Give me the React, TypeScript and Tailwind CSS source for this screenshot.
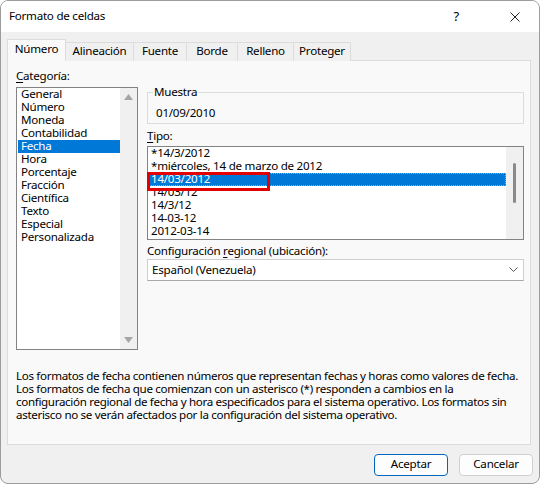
const font = { fontFamily: '"Noto Sans", "Liberation Sans", sans-serif' }

const categorias = [
  'General',
  'Número',
  'Moneda',
  'Contabilidad',
  'Fecha',
  'Hora',
  'Porcentaje',
  'Fracción',
  'Científica',
  'Texto',
  'Especial',
  'Personalizada',
]

const tipos = [
  '*14/3/2012',
  '*miércoles, 14 de marzo de 2012',
  '14/03/2012',
  '14/03/12',
  '14/3/12',
  '14-03-12',
  '2012-03-14',
]

const tabs = [
  { label: 'Alineación', w: 'w-[68px]' },
  { label: 'Fuente', w: 'w-[53px]' },
  { label: 'Borde', w: 'w-[51px]' },
  { label: 'Relleno', w: 'w-[56px]' },
  { label: 'Proteger', w: 'w-[57px]' },
]

function Arrow({ down }: { down?: boolean }) {
  return (
    <svg width="9" height="6" viewBox="0 0 9 6">
      {down ? (
        <path d="M0 0 H9 L4.5 6 Z" fill="#a6a6a6" />
      ) : (
        <path d="M0 6 H9 L4.5 0 Z" fill="#a6a6a6" />
      )}
    </svg>
  )
}

export default function App() {
  return (
    <div
      style={font}
      className="w-[540px] h-[484px] overflow-hidden rounded-[8px] border border-[#9c9c9c] bg-[#f0f0f0] text-[11.6px] leading-[12px] tracking-[-0.25px] text-black"
    >
      {/* title bar */}
      <div className="flex h-[31px] items-center bg-white pb-[2px] pl-[8px]">
        <span>Formato de celdas</span>
        <span className="ml-auto mr-[51px] text-[13px]">?</span>
        <svg className="mr-[19px] mt-[2px]" width="10" height="10" viewBox="0 0 10 10">
          <path d="M0.5 0.5 L9.5 9.5 M9.5 0.5 L0.5 9.5" stroke="#222" strokeWidth="1" />
        </svg>
      </div>

      {/* tabs */}
      <div className="relative z-10 -mb-px ml-[6px] mt-[7px] flex items-end">
        <div className="flex h-[22px] w-[59px] items-center justify-center border-x border-t border-[#dcdcdc] bg-[#f9f9f9] pb-[3px]">
          Número
        </div>
        {tabs.map((t) => (
          <div
            key={t.label}
            className={`flex h-[19px] ${t.w} items-center justify-center border-r border-t border-[#dcdcdc] bg-[#f0f0f0] pb-[2px]`}
          >
            {t.label}
          </div>
        ))}
      </div>

      {/* panel */}
      <div className="ml-[6px] h-[385px] w-[524px] border border-[#dcdcdc] bg-[#f9f9f9]">
        <div className="flex items-start">
          {/* categoria */}
          <div className="ml-[8px] flex flex-col pt-[9px]">
            <div className="mb-[5px]">
              <span className="underline underline-offset-2">C</span>ategoría:
            </div>
            <div className="flex h-[263px] w-[122px] border border-[#838383] bg-white pl-[1px]">
              <div className="flex-1">
                {categorias.map((c) => (
                  <div
                    key={c}
                    className={`h-[13px] px-[3px] ${c === 'Fecha' ? 'bg-[#0078d7] text-white' : ''}`}
                  >
                    {c}
                  </div>
                ))}
              </div>
              <div className="flex w-[17px] flex-col items-center justify-between bg-[#f0f0f0] pb-[6px] pt-[6px]">
                <Arrow />
                <Arrow down />
              </div>
            </div>
          </div>

          {/* right column */}
          <div className="ml-[9px] flex w-[377px] flex-col pt-[31px]">
            <div className="relative h-[32px] border border-[#dcdcdc] pl-[8px] pt-[14px]">
              <span className="absolute -top-[7px] left-[5px] bg-[#f9f9f9] px-[1px]">Muestra</span>
              01/09/2010
            </div>

            <div className="mb-[4px] mt-[6px]">
              <span className="underline underline-offset-2">T</span>ipo:
            </div>
            <div className="relative flex h-[94px] border border-[#838383] bg-white">
              <div className="flex-1">
                {tipos.map((t, i) => (
                  <div
                    key={t}
                    className={
                      i === 2
                        ? 'h-[13px] border border-dotted border-[#e8a23c] bg-[#0078d7] px-[2px] leading-[10px] text-white'
                        : 'h-[13px] px-[3px]'
                    }
                  >
                    {t}
                  </div>
                ))}
              </div>
              <div className="flex w-[17px] justify-center bg-[#f0f0f0] pt-[16px]">
                <div className="h-[40px] w-[3px] rounded-full bg-[#8a8a8a]" />
              </div>
              <div className="absolute -left-px top-[25px] h-[19px] w-[123px] border-[3px] border-[#e30000]" />
            </div>

            <div className="mb-[2px] mt-[5px]">
              Configuración <span className="underline underline-offset-2">r</span>egional (ubicación):
            </div>
            <div className="flex h-[22px] items-center border border-[#cfcfcf] border-b-[#a8a8a8] bg-white pb-px pl-[4px]">
              <span>Español (Venezuela)</span>
              <svg className="ml-auto mr-[5px]" width="9" height="5" viewBox="0 0 9 5">
                <path d="M0.5 0.5 L4.5 4.5 L8.5 0.5" stroke="#555" fill="none" strokeWidth="1" />
              </svg>
            </div>
          </div>
        </div>

        <p className="ml-[8px] mt-[19px] whitespace-nowrap leading-[13px] tracking-[-0.33px]">
          Los formatos de fecha contienen números que representan fechas y horas como valores de fecha.
          <br />
          Los formatos de fecha que comienzan con un asterisco (*) responden a cambios en la
          <br />
          configuración regional de fecha y hora especificados para el sistema operativo. Los formatos sin
          <br />
          asterisco no se verán afectados por la configuración del sistema operativo.
        </p>
      </div>

      {/* buttons */}
      <div className="mt-[9px] flex justify-end gap-[11px] pr-[6px]">
        <button className="h-[22px] w-[74px] rounded-[4px] border border-[#0067c0] bg-[#fdfdfd] pb-[2px]">
          Aceptar
        </button>
        <button className="h-[22px] w-[74px] rounded-[4px] border border-[#d0d0d0] bg-[#fdfdfd] pb-[2px]">
          Cancelar
        </button>
      </div>
    </div>
  )
}
